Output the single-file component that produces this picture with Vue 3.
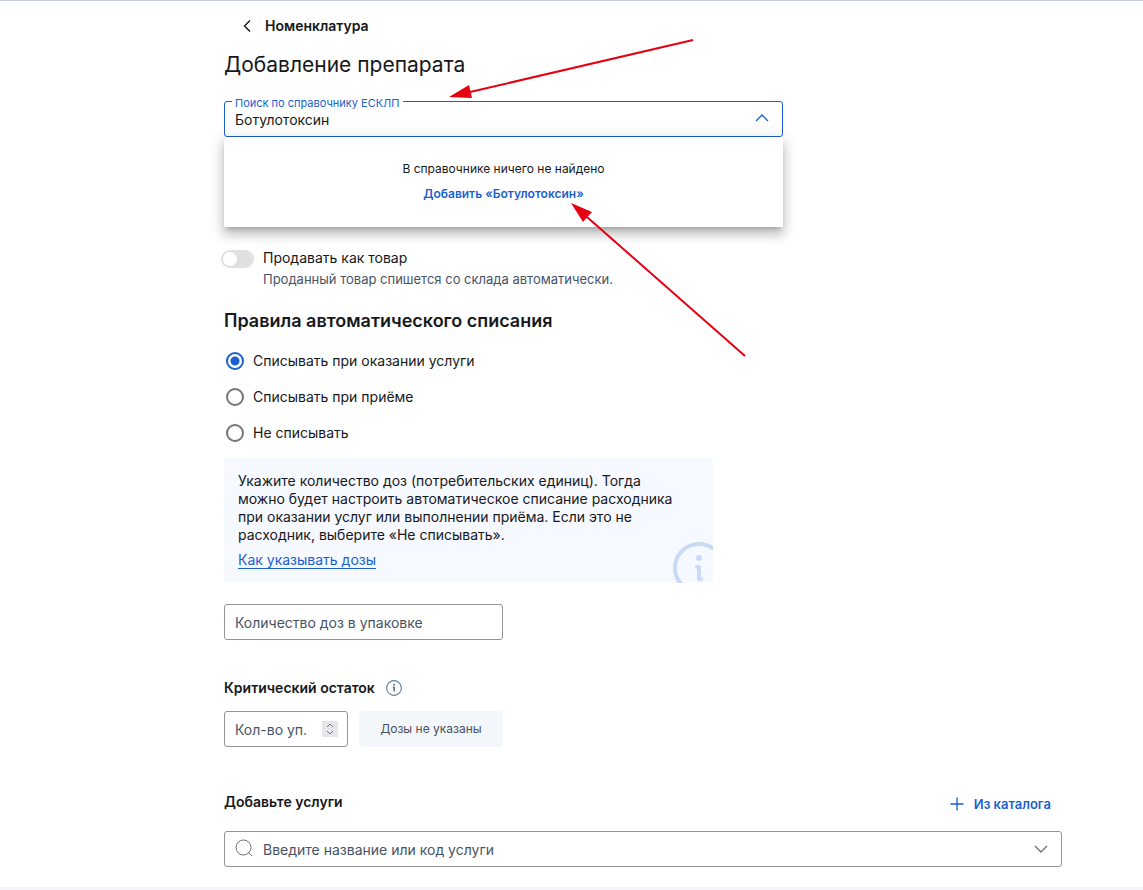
<template>
  <div class="page">
    <main class="content">
      <nav class="back">
        <a href="#" class="back-link" @click.prevent>
          <svg class="back-icon" viewBox="0 0 16 16"><path d="M11 2.5 5.5 8l5.5 5.5" /></svg>
          Номенклатура
        </a>
      </nav>

      <h1>Добавление препарата</h1>

      <!-- Drug search -->
      <div class="search">
        <div class="field field-active">
          <label class="float-label" for="drug">Поиск по справочнику ЕСКЛП</label>
          <input id="drug" v-model="query" type="text" role="combobox" aria-expanded="true" autocomplete="off" />
          <svg class="chevron" viewBox="0 0 16 16"><path d="m2 10 6-6 6 6" /></svg>
        </div>
        <div class="menu">
          <p>В справочнике ничего не найдено</p>
          <button type="button" class="menu-add">Добавить «{{ query }}»</button>
        </div>
      </div>

      <!-- Sell switch -->
      <div class="sell">
        <input id="sell" v-model="sell" class="switch" type="checkbox" role="switch" />
        <div>
          <label for="sell">Продавать как товар</label>
          <p class="hint">Проданный товар спишется со склада автоматически.</p>
        </div>
      </div>

      <h2>Правила автоматического списания</h2>

      <div class="radios" role="radiogroup">
        <label v-for="rule in rules" :key="rule.value" class="radio">
          <input v-model="selectedRule" type="radio" name="rule" :value="rule.value" />
          {{ rule.label }}
        </label>
      </div>

      <div class="info">
        <p>
          Укажите количество доз (потребительских единиц). Тогда можно будет настроить
          автоматическое списание расходника при оказании услуг или выполнении приёма.
          Если это не расходник, выберите «Не списывать».
        </p>
        <a href="#" @click.prevent>Как указывать дозы</a>
        <svg class="info-mark" viewBox="0 0 52 52">
          <circle cx="26" cy="26" r="24" fill="none" stroke="currentColor" stroke-width="4" />
          <circle cx="26" cy="16" r="3" fill="currentColor" />
          <path d="M24 25h2v12h2" fill="none" stroke="currentColor" stroke-width="4" stroke-linecap="round" stroke-linejoin="round" />
        </svg>
      </div>

      <div class="field doses">
        <input id="doses" v-model="doses" type="text" placeholder=" " />
        <label class="inner-label" for="doses">Количество доз в упаковке</label>
      </div>

      <!-- Critical stock -->
      <div class="stock-head">
        <h3>Критический остаток</h3>
        <svg class="info-icon" viewBox="0 0 16 16">
          <circle cx="8" cy="8" r="7.4" />
          <path class="stem" d="M6.8 7.3h1.4v4.2" />
          <circle class="dot" cx="8" cy="4.8" r="1" />
        </svg>
      </div>
      <div class="stock">
        <div class="field count">
          <input id="count" v-model="count" type="number" placeholder=" " />
          <label class="inner-label" for="count">Кол-во уп.</label>
          <svg class="stepper" viewBox="0 0 16 16"><path d="m5 6 3-3 3 3M5 10l3 3 3-3" /></svg>
        </div>
        <div class="no-doses">Дозы не указаны</div>
      </div>

      <!-- Services -->
      <div class="services-head">
        <label for="services">Добавьте услуги</label>
        <button type="button" class="catalog">
          <svg viewBox="0 0 14 14"><path d="M7 .5v13M.5 7h13" /></svg>
          Из каталога
        </button>
      </div>
      <div class="field services">
        <svg class="search-icon" viewBox="0 0 18 18">
          <circle cx="8.5" cy="8.5" r="7.5" />
          <path d="m13.5 13.5 3.5 3.5" />
        </svg>
        <input id="services" v-model="service" type="text" role="combobox" aria-expanded="false" placeholder="Введите название или код услуги" />
        <svg class="chevron" viewBox="0 0 16 16"><path d="m2 5 6 6 6-6" /></svg>
      </div>
    </main>

    <!-- Pointers to the search field and the add button -->
    <svg class="arrows" width="300" height="320" viewBox="0 0 300 320">
      <path class="line" d="M245 4 22 56M297 320 139 181" />
      <path class="head" d="M1 61 21 49 24 62zM123 167l21 9-9 10z" />
    </svg>
  </div>
</template>

<script setup>
import { ref } from 'vue'

const query = ref('Ботулотоксин')
const sell = ref(false)
const selectedRule = ref('service')
const doses = ref('')
const count = ref('')
const service = ref('')

const rules = [
  { value: 'service', label: 'Списывать при оказании услуги' },
  { value: 'visit', label: 'Списывать при приёме' },
  { value: 'none', label: 'Не списывать' }
]
</script>

<style>
body {
  background: #fff;
}
</style>

<style scoped>
.page {
  --blue: #1a5fd0;
  --text: #16181b;
  --muted: #475365;
  --border: #949494;

  position: relative;
  border-top: 1px solid #c6cfdf;
  border-bottom: 3px solid #f4f6fc;
  font-family: Inter, 'Liberation Sans', sans-serif;
  font-size: 14px;
  line-height: 18px;
  color: var(--text);
}

.page * {
  box-sizing: border-box;
}

h1, h2, h3, p {
  margin: 0;
}

input, button {
  font: inherit;
  color: inherit;
}

svg {
  flex: none;
  fill: none;
  stroke: currentColor;
}

.content {
  max-width: 838px;
  margin: 0 81px 0 224px;
  padding: 16px 0 20px;
}

.back {
  display: flex;
  padding-left: 15px;
}

.back-link {
  display: flex;
  align-items: center;
  gap: 10px;
  font-weight: 600;
  color: inherit;
  text-decoration: none;
}

.back-icon {
  width: 16px;
  height: 16px;
  stroke-width: 1.4;
}

h1 {
  margin-top: 16px;
  font-size: 21px;
  font-weight: 400;
  line-height: 28px;
}

h2 {
  margin-top: 21px;
  font-size: 18px;
  font-weight: 600;
  line-height: 24px;
}

h3 {
  font-size: 14px;
  font-weight: 600;
}

/* Fields */
.field {
  position: relative;
  display: flex;
  align-items: center;
  height: 36px;
  padding: 0 10px;
  border: 1px solid var(--border);
  border-radius: 3px;
}

.field input {
  flex: 1;
  min-width: 0;
  height: 100%;
  padding: 0;
  border: 0;
  outline: none;
  background: none;
}

.field input::placeholder {
  color: var(--muted);
  opacity: 1;
}

.field-active {
  border-color: var(--blue);
}

.float-label {
  position: absolute;
  top: -6px;
  left: 7px;
  padding: 0 3px;
  background: #fff;
  font-size: 11px;
  line-height: 14px;
  color: var(--blue);
}

.inner-label {
  position: absolute;
  top: 9px;
  left: 10px;
  color: var(--muted);
  pointer-events: none;
}

.field input:not(:placeholder-shown) + .inner-label {
  display: none;
}

.chevron {
  width: 16px;
  height: 16px;
  margin-right: 2px;
  stroke-width: 1.3;
}

.field-active .chevron {
  color: var(--blue);
}

/* Search menu */
.search {
  position: relative;
  max-width: 559px;
  margin-top: 22px;
}

.menu {
  position: absolute;
  z-index: 1;
  top: 100%;
  left: 0;
  right: 0;
  display: flex;
  flex-direction: column;
  align-items: center;
  gap: 7px;
  padding: 23px 20px 24px;
  background: #fff;
  box-shadow: 0 5px 5px -3px rgba(0, 0, 0, 0.2), 0 8px 10px 1px rgba(0, 0, 0, 0.14), 0 3px 14px 2px rgba(0, 0, 0, 0.12);
  font-size: 12px;
}

.menu-add {
  padding: 0;
  border: 0;
  background: none;
  font-weight: 600;
  color: var(--blue);
  cursor: pointer;
}

/* Switch */
.sell {
  display: flex;
  gap: 9px;
  margin: 112px 0 0 -3px;
}

.switch {
  appearance: none;
  flex: none;
  display: flex;
  width: 33px;
  height: 18px;
  margin: 1px 0 0;
  padding: 2px;
  border-radius: 9px;
  background: #e0e0e0;
}

.switch::before {
  content: '';
  width: 14px;
  height: 14px;
  border-radius: 50%;
  background: #fff;
}

.switch:checked {
  justify-content: flex-end;
  background: var(--blue);
}

.hint {
  margin-top: 3px;
  font-size: 13px;
  color: var(--muted);
}

/* Radios */
.radios {
  margin-top: 10px;
}

.radio {
  display: flex;
  align-items: center;
  gap: 9px;
  height: 36px;
  padding-left: 2px;
}

.radio input {
  appearance: none;
  width: 18px;
  height: 18px;
  margin: 0;
  border: 2px solid #757575;
  border-radius: 50%;
}

.radio input:checked {
  border-color: var(--blue);
  background: radial-gradient(circle, var(--blue) 4px, transparent 5px);
}

/* Info block */
.info {
  position: relative;
  max-width: 489px;
  margin-top: 6px;
  padding: 15px 28px 14px 14px;
  border-radius: 4px;
  background: #f6f9ff;
  overflow: hidden;
}

.info a {
  display: inline-block;
  margin-top: 7px;
  color: var(--blue);
  text-underline-offset: 3px;
}

.info-mark {
  position: absolute;
  right: -12px;
  bottom: -11px;
  width: 52px;
  height: 52px;
  stroke: none;
  color: #c9daf6;
}

.doses {
  max-width: 279px;
  margin-top: 21px;
}

/* Critical stock */
.stock-head {
  display: flex;
  align-items: center;
  gap: 11px;
  margin-top: 39px;
}

.info-icon {
  width: 16px;
  height: 16px;
  stroke-width: 1.1;
  color: #5f7b9c;
}

.info-icon .stem {
  stroke-width: 1.7;
}

.info-icon .dot {
  fill: currentColor;
  stroke: none;
}

.stock {
  display: flex;
  gap: 11px;
  max-width: 279px;
  margin-top: 14px;
}

.count {
  width: 124px;
  padding-right: 9px;
}

.count input {
  appearance: textfield;
}

.count input::-webkit-inner-spin-button {
  appearance: none;
}

.stepper {
  width: 16px;
  height: 16px;
  background: #e7e6ec;
  color: #74767c;
}

.no-doses {
  flex: 1;
  border-radius: 4px;
  background: #f3f6fb;
  font-size: 12px;
  line-height: 36px;
  text-align: center;
  color: var(--muted);
}

/* Services */
.services-head {
  display: flex;
  justify-content: space-between;
  align-items: flex-start;
  margin-top: 46px;
  padding-right: 11px;
  font-weight: 600;
}

.catalog {
  display: flex;
  align-items: center;
  gap: 10px;
  padding: 0;
  border: 0;
  background: none;
  font-size: 13px;
  line-height: 22px;
  color: var(--blue);
  cursor: pointer;
}

.catalog svg {
  width: 14px;
  height: 14px;
  stroke-width: 1.3;
}

.services {
  margin-top: 16px;
}

.search-icon {
  width: 18px;
  height: 18px;
  margin: 0 10px 2px 0;
  color: #707070;
}

.services .chevron {
  color: #707070;
}

.arrows {
  position: absolute;
  z-index: 2;
  top: 35px;
  left: 448px;
  overflow: visible;
  pointer-events: none;
}

.arrows .line {
  stroke: #e60012;
  stroke-width: 2;
}

.arrows .head {
  fill: #e60012;
  stroke: none;
}
</style>
